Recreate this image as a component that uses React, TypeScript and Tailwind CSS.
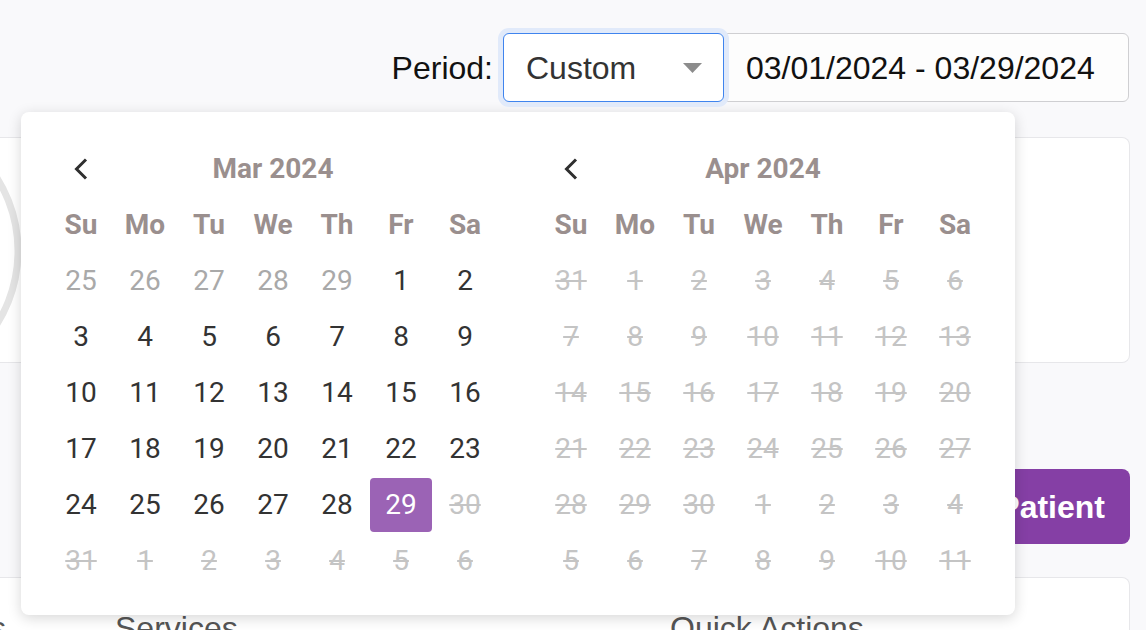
import React from "react";

type Kind = "muted" | "normal" | "disabled" | "selected";

const maxDate = new Date(2024, 2, 29);
const weekdays = ["Su", "Mo", "Tu", "We", "Th", "Fr", "Sa"];

function buildMonth(year: number, month: number) {
  const firstDow = new Date(year, month, 1).getDay();
  return Array.from({ length: 42 }, (_, i) => {
    const d = new Date(year, month, 1 - firstDow + i);
    let kind: Kind = "normal";
    if (d.getTime() === maxDate.getTime()) kind = "selected";
    else if (d > maxDate) kind = "disabled";
    else if (d.getMonth() !== month) kind = "muted";
    return { n: d.getDate(), kind, key: d.toISOString() };
  });
}

const dayClass: Record<Kind, string> = {
  normal: "text-[#333333]",
  muted: "text-[#a9a9a9]",
  disabled: "text-[#c4c4c4] line-through",
  selected: "bg-[#9b63b5] text-white rounded-[4px]",
};

const Chevron = () => (
  <svg width="14" height="22" viewBox="0 0 14 22" fill="none">
    <polyline points="12,1.5 2.5,11 12,20.5" stroke="#2f2f2f" strokeWidth="3" strokeLinejoin="miter" />
  </svg>
);

const Month: React.FC<{ title: string; year: number; month: number }> = ({ title, year, month }) => {
  const days = buildMonth(year, month);
  return (
    <div className="w-[448px]">
      <div className="grid grid-cols-7 h-[56px] items-center">
        <div className="flex justify-center">
          <Chevron />
        </div>
        <div className="col-span-5 text-center font-bold text-[28px] text-[#9a8f8e]">{title}</div>
        <div />
      </div>
      <div className="grid grid-cols-7 h-[56px] items-center">
        {weekdays.map((w) => (
          <div key={w} className="text-center font-bold text-[28px] text-[#9a8f8e]">
            {w}
          </div>
        ))}
      </div>
      <div className="grid grid-cols-7">
        {days.map((d) => (
          <div key={d.key} className="h-[56px] p-px">
            <div className={`h-full flex items-center justify-center text-[28px] ${dayClass[d.kind]}`}>{d.n}</div>
          </div>
        ))}
      </div>
    </div>
  );
};

export default function App() {
  return (
    <div className="relative h-[630px] overflow-hidden bg-[#f9f9fb] font-['Liberation_Sans',Arial,sans-serif]">
      <div className="flex justify-end items-center pt-[33px] pr-[17px]">
        <span className="text-[32px] text-[#111] mr-[10px]">Period:</span>
        <div className="relative z-10 w-[221px] h-[69px] rounded-[6px] border border-[#3f84ee] bg-white ring-[5px] ring-[#e1eafa] flex items-center justify-between pl-[22px] pr-[21px]">
          <span className="text-[32px] text-[#333]">Custom</span>
          <svg width="19" height="10" viewBox="0 0 19 10">
            <polygon points="0,0 19,0 9.5,10" fill="#8c8c8c" />
          </svg>
        </div>
        <div className="-ml-px w-[406px] h-[69px] rounded-r-[6px] border border-[#cfcfd2] bg-[#fdfdfd] flex items-center pl-[22px]">
          <span className="text-[32px] text-[#111]">03/01/2024 - 03/29/2024</span>
        </div>
      </div>

      <div className="mt-[35px] mr-[16px] h-[226px] bg-white border border-l-0 border-[#e7e7ea] rounded-r-[8px] overflow-hidden">
        <svg width="40" height="224" viewBox="0 0 40 224">
          <circle cx="-119" cy="113" r="137" fill="none" stroke="#e4e4e4" strokeWidth="7" />
        </svg>
      </div>

      <div className="flex justify-end mt-[106px] mr-[16px]">
        <button className="h-[75px] px-[25px] rounded-[8px] bg-[#853fa5] text-white font-bold text-[32px]">Add Patient</button>
      </div>

      <div className="mt-[33px] mr-[16px] h-[80px] bg-white border border-l-0 border-[#e7e7ea] rounded-tr-[8px] flex pt-[34px] text-[32px] leading-[32px] text-[#555]">
        <div className="w-[115px]">
          <div className="w-[6px] flex justify-end overflow-hidden whitespace-nowrap">
            <span>Visits</span>
          </div>
        </div>
        <div className="w-[555px]">Services</div>
        <div>Quick Actions</div>
      </div>

      <div className="absolute left-[21px] top-[112px] w-[994px] h-[503px] bg-white rounded-[8px] shadow-[0_3px_14px_rgba(0,0,0,0.16)] px-[28px] pt-[29px] flex justify-between font-['Roboto',sans-serif]">
        <Month title="Mar 2024" year={2024} month={2} />
        <Month title="Apr 2024" year={2024} month={3} />
      </div>
    </div>
  );
}
